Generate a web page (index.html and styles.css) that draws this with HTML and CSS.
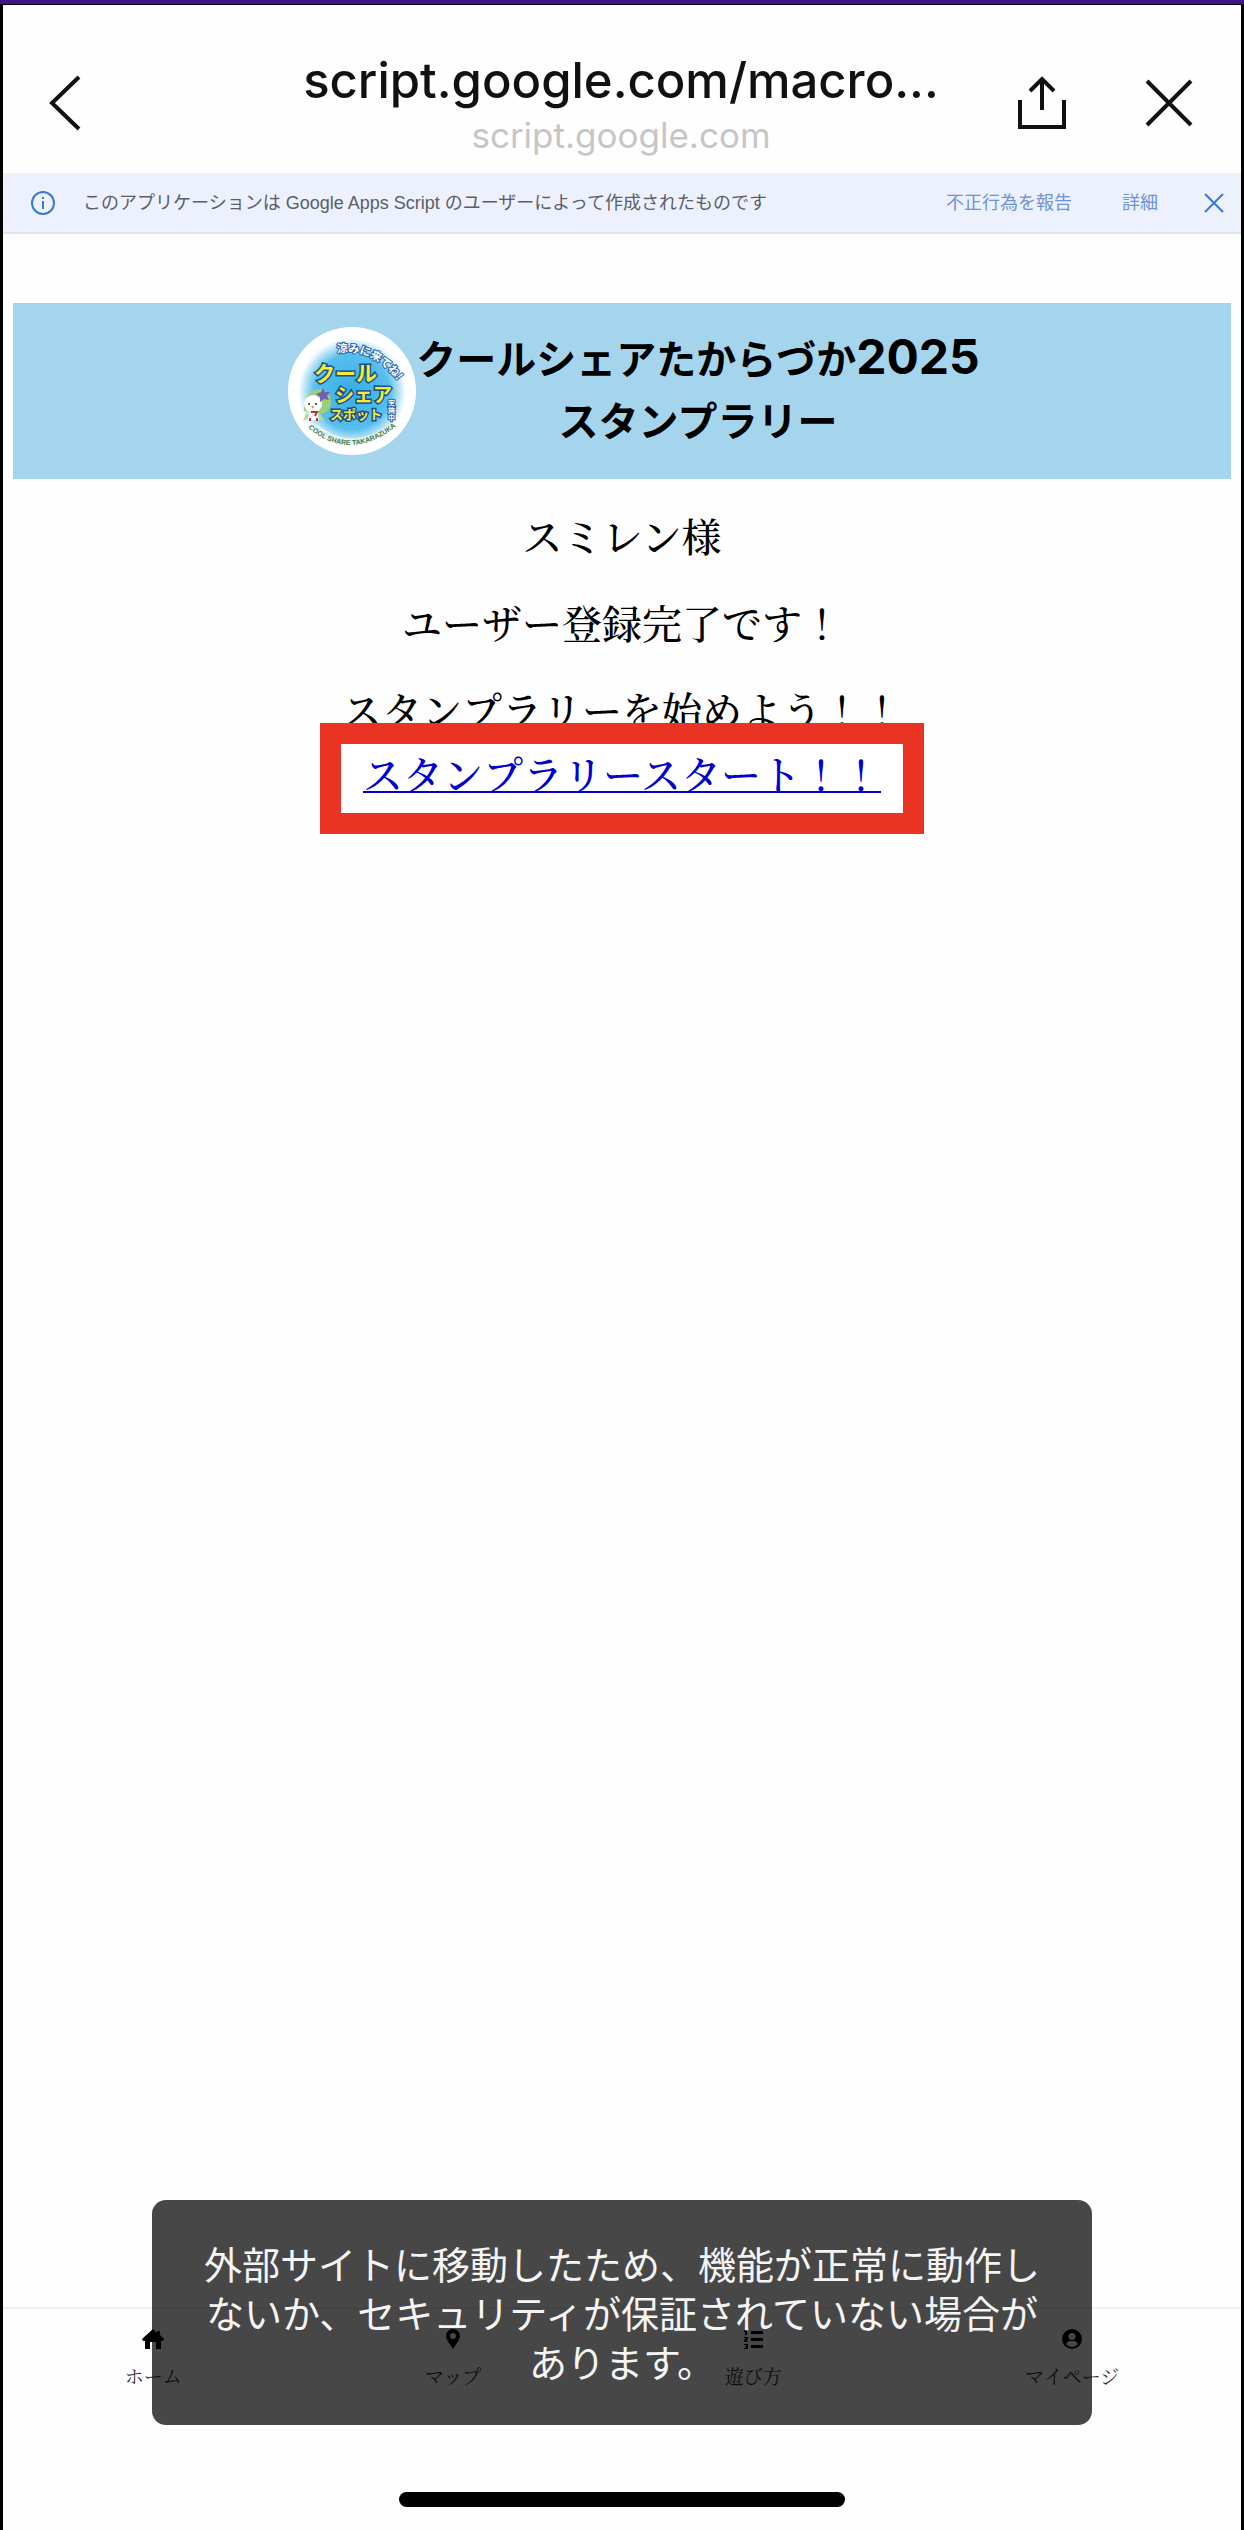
FILE: index.html
```html
<!DOCTYPE html>
<html lang="ja">
<head>
<meta charset="utf-8">
<meta name="viewport" content="width=device-width, initial-scale=1">
<title>クールシェアたからづか2025 スタンプラリー</title>
<link rel="stylesheet" href="styles.css">
</head>
<body>
<div class="screen">
  <header class="browser-bar">
    <button class="icon-button" type="button" aria-label="戻る">
      <svg width="32" height="56" viewBox="0 0 32 56" fill="none" stroke="#111" stroke-width="4"><path d="M30 2 3 28l27 26"/></svg>
    </button>
    <div class="address">
      <div class="address-title">script.google.com/macro...</div>
      <div class="address-host">script.google.com</div>
    </div>
    <div class="browser-actions">
      <button class="icon-button" type="button" aria-label="共有">
        <svg width="50" height="54" viewBox="0 0 50 54" fill="none" stroke="#111" stroke-width="4"><path d="M3 24v27h44V24M25 34V3M13 15 25 3l12 12"/></svg>
      </button>
      <button class="icon-button" type="button" aria-label="閉じる">
        <svg width="48" height="48" viewBox="0 0 48 48" fill="none" stroke="#111" stroke-width="4"><path d="M2 2l44 44M46 2 2 46"/></svg>
      </button>
    </div>
  </header>

  <div class="notice">
    <svg class="notice-icon" width="26" height="26" viewBox="0 0 26 26" fill="none" stroke="#3b78cf" stroke-width="2"><circle cx="13" cy="13" r="11"/><path d="M13 11v8M13 7v2"/></svg>
    <p class="notice-text">このアプリケーションは Google Apps Script のユーザーによって作成されたものです</p>
    <a class="notice-link" href="#report">不正行為を報告</a>
    <a class="notice-link" href="#details">詳細</a>
    <button class="icon-button notice-close" type="button" aria-label="通知を閉じる">
      <svg width="20" height="20" viewBox="0 0 20 20" fill="none" stroke="#3b78cf" stroke-width="2"><path d="M1 1l18 18M19 1 1 19"/></svg>
    </button>
  </div>

  <main class="content">
    <div class="hero">
      <svg class="hero-logo" width="128" height="128" viewBox="0 0 128 128" role="img" aria-label="クールシェアスポット">
        <defs>
          <radialGradient id="glow"><stop offset="0" stop-color="#35aee6"/><stop offset=".7" stop-color="#58bfee"/><stop offset="1" stop-color="#fff"/></radialGradient>
          <path id="arc-top" d="M49 26Q90 20 116 64"/>
          <path id="arc-bottom" d="M20 101Q63 137 111 97"/>
        </defs>
        <circle cx="64" cy="64" r="64" fill="#fff"/>
        <circle cx="64" cy="65" r="54" fill="url(#glow)"/>
        <path d="M28 98Q63 127 103 98" fill="none" stroke="#e9f6ee" stroke-width="2"/>
        <g class="logo-main">
          <text x="26" y="54" font-size="21">クール</text>
          <text x="47" y="75" font-size="19">シェア</text>
          <text x="42" y="92" font-size="13">スポット</text>
        </g>
        <g class="logo-call">
          <text font-size="11"><textPath href="#arc-top">涼みに来てね!</textPath></text>
          <text font-size="7"><tspan x="100" y="79">実</tspan><tspan x="100" y="86">施</tspan><tspan x="100" y="93">中</tspan></text>
        </g>
        <text class="logo-roman" font-size="7"><textPath href="#arc-bottom">COOL SHARE TAKARAZUKA</textPath></text>
        <path d="M16 84c0-28 26-27 27-10 0 8-4 13-13 13z" fill="#9bcf78"/>
        <ellipse cx="25" cy="77" rx="9" ry="9" fill="#fff"/>
        <path d="M18 87l-3 7 10-5 12 6-5-9z" fill="#b5d895"/>
        <path d="M21 86h9l1 7H20z" fill="#fff"/>
        <path d="M23 85h6l-2 4M22 94v-3M29 94v-3" stroke="#b6353c" stroke-width="2" fill="none"/>
        <circle cx="21" cy="77" r="1" fill="#222"/><circle cx="28" cy="77" r="1" fill="#222"/><path d="M23 79h3l-1 3z" fill="#d98b35"/>
        <path d="M35 61l2 4 5 0-3 4 2 4-5-1-4 3 0-5-4-3 5-2z" fill="#7161b4"/>
      </svg>
      <h1 class="hero-title">クールシェアたからづか<span class="hero-year">2025</span><br>スタンプラリー</h1>
    </div>
    <div class="message">
      <p>スミレン様</p>
      <p>ユーザー登録完了です！</p>
      <p>スタンプラリーを始めよう！！</p>
      <a class="start-link" href="#start">スタンプラリースタート！！</a>
    </div>
  </main>

  <footer class="bottom">
    <nav class="tabs">
      <a class="tab" href="#home">
        <svg width="22" height="20" viewBox="0 0 22 20"><path d="M11 0 0 10l1 2h2v8h5v-7h6v7h5v-8h2l1-2-4-4V2h-3v2z"/></svg>
        <span>ホーム</span>
      </a>
      <a class="tab" href="#map">
        <svg width="22" height="20" viewBox="0 0 22 20"><path fill-rule="evenodd" d="M11 20C7 14 4 10 4 7a7 7 0 0 1 14 0c0 3-3 7-7 13zM11 4a3 3 0 1 0 0 6 3 3 0 0 0 0-6z"/></svg>
        <span>マップ</span>
      </a>
      <a class="tab" href="#guide">
        <svg width="22" height="20" viewBox="0 0 22 20"><path d="M9 2h12v3H9zM9 9h12v3H9zM9 16h12v3H9zM2 1h3v5H3V3H2zM2 8h4v2L4 12h2v1H2v-2l2-2H2zM2 15h4v5H2v-1h2v-1H3v-1h1v-1H2z"/></svg>
        <span>遊び方</span>
      </a>
      <a class="tab" href="#mypage">
        <svg width="22" height="20" viewBox="0 0 22 20"><path fill-rule="evenodd" d="M11 0a10 10 0 1 0 0 20 10 10 0 0 0 0-20zM11 4a3 3 0 1 1 0 7 3 3 0 0 1 0-7zM5 15c1-2 3-3 4-3h4c1 0 3 1 4 3-3 4-9 4-12 0z"/></svg>
        <span>マイページ</span>
      </a>
    </nav>
    <div class="home-area"><div class="home-indicator"></div></div>
    <div class="toast" role="status">外部サイトに移動したため、機能が正常に動作しないか、セキュリティが保証されていない場合があります。</div>
  </footer>
</div>
</body>
</html>
```
FILE: styles.css
```css
* {
  box-sizing: border-box;
}

body {
  margin: 0;
  background: #fefefe;
  color: #000;
  font-family: "Noto Serif CJK JP", "Noto Sans CJK JP", serif;
}

p,
h1 {
  margin: 0;
}

.screen {
  display: flex;
  flex-direction: column;
  min-height: 100vh;
  border: solid #000;
  border-width: 0 3px;
}

.screen::before {
  content: "";
  height: 4px;
  margin: 0 -3px;
  background: #43118a;
  border-bottom: 1px solid #000;
}

.icon-button {
  display: flex;
  padding: 0;
  border: 0;
  background: none;
}

/* Browser bar */
.browser-bar {
  display: grid;
  grid-template-columns: 1fr auto 1fr;
  align-items: center;
  height: 168px;
  padding: 28px 48px 0 46px;
  font-family: Inter, "Noto Sans CJK JP", sans-serif;
}

.address {
  padding-top: 4px;
  text-align: center;
}

.address-title {
  font-size: 49px;
  font-weight: 500;
  line-height: 60px;
  color: #111;
}

.address-host {
  font-size: 35px;
  line-height: 48px;
  color: #c6c6c6;
}

.browser-actions {
  display: flex;
  justify-content: flex-end;
  align-items: center;
  gap: 78px;
}

/* Apps Script notice */
.notice {
  display: flex;
  align-items: center;
  height: 61px;
  padding: 0 17px 0 27px;
  border-bottom: 2px solid #dfe3ec;
  background: #ecf1fd;
  font-family: "Liberation Sans", "Noto Sans CJK JP", sans-serif;
  font-size: 18px;
  line-height: 26px;
}

.notice-text {
  flex: 1;
  margin-left: 27px;
  color: #5b5e66;
  white-space: nowrap;
}

.notice-link {
  margin-left: 50px;
  color: #6d93d8;
  text-decoration: none;
}

.notice-close {
  margin-left: 46px;
}

/* Page content */
.content {
  flex: 1;
  padding: 69px 10px 0;
}

.hero {
  display: flex;
  justify-content: center;
  align-items: center;
  min-height: 176px;
  padding-left: 24px;
  background: #a5d5ec;
}

.hero-title {
  font-family: Inter, "Noto Sans CJK JP", sans-serif;
  font-size: 40px;
  font-weight: 700;
  line-height: 62px;
  text-align: center;
}

.hero-year {
  font-size: 48px;
  line-height: 40px;
}

.logo-main {
  font-family: "Noto Sans CJK JP", sans-serif;
  font-weight: 700;
  fill: #f4ec38;
  stroke: #1f4f86;
  stroke-width: 3px;
  paint-order: stroke;
}

.logo-call {
  font-family: "Noto Sans CJK JP", sans-serif;
  font-weight: 700;
  fill: #fff;
  stroke: #2563ad;
  stroke-width: 2px;
  paint-order: stroke;
}

.logo-roman {
  font-family: "Liberation Sans", sans-serif;
  font-weight: 700;
  fill: #4c7a4c;
}

.message {
  display: flex;
  flex-direction: column;
  align-items: center;
  padding-top: 26px;
  font-size: 40px;
  font-weight: 500;
  line-height: 60px;
  text-align: center;
}

.message p {
  margin-bottom: 27px;
}

.start-link {
  position: relative;
  margin-top: -43px;
  padding: 0 22px 9px;
  border: 21px solid #e93323;
  background: #fff;
  color: #0000d0;
  line-height: 58px;
  padding-bottom: 11px;
  text-decoration-thickness: 2px;
}

/* Bottom tabs and toast */
.bottom {
  position: relative;
}

.tabs {
  display: flex;
  justify-content: space-around;
  height: 98px;
  padding-top: 20px;
  border-top: 2px solid #f1f1f1;
  border-bottom: 1px solid #fafafa;
}

.tab {
  display: flex;
  flex-direction: column;
  align-items: center;
  gap: 13px;
  color: #333;
  font-size: 19px;
  line-height: 28px;
  text-decoration: none;
}

.tab svg {
  fill: #000;
}

.home-area {
  display: flex;
  justify-content: center;
  align-items: flex-end;
  height: 125px;
  padding-bottom: 23px;
}

.home-indicator {
  width: 36%;
  height: 15px;
  border-radius: 8px;
  background: #000;
}

.toast {
  position: absolute;
  right: 12%;
  bottom: 105px;
  left: 12%;
  padding: 38px 48px 40px;
  border-radius: 14px;
  background: rgba(0, 0, 0, 0.72);
  color: #f4f4f4;
  font-family: "Noto Sans CJK JP", sans-serif;
  font-size: 38px;
  line-height: 49px;
  text-align: center;
}
```
